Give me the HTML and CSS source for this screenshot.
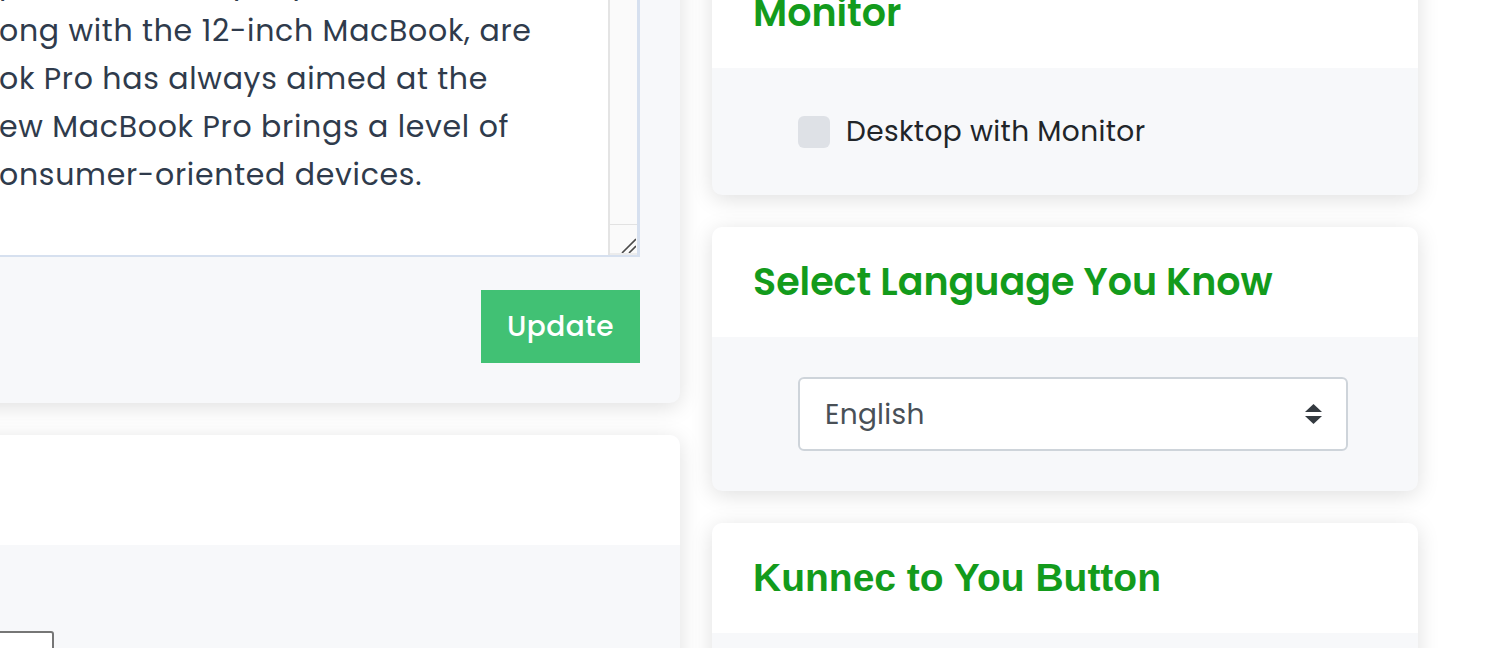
FILE: index.html
```html
<!DOCTYPE html>
<html lang="en">
<head>
<meta charset="utf-8">
<title>Profile settings</title>
<link rel="stylesheet" href="styles.css">
</head>
<body>
<div class="page">
  <div class="col col-left">
    <section class="card">
      <header class="card-head"><h2 class="card-title">Bio</h2></header>
      <div class="card-body">
        <div class="textarea">
          <div class="ta-text">
            <div class="ln"><span class="cut"><span>The new MacBook Pro is</span></span>n't the machine for everyone. It</div>
            <div class="ln"><span class="cut"><span>is a tool built for</span></span> professionals who need power and</div>
            <div class="ln"><span class="cut"><span>portability in one package. Most</span></span> laptops are designed to be</div>
            <div class="ln"><span class="cut"><span>appealing to the masses and po</span></span>pular with everyday users. The Air,</div>
            <div class="ln"><span class="cut"><span>The MacBook Air, al</span></span>ong with the 12-inch MacBook, are</div>
            <div class="ln"><span class="cut"><span>meant for everyone. The MacBo</span></span>ok Pro has always aimed at the</div>
            <div class="ln"><span class="cut"><span>high end of the market, and the n</span></span>ew MacBook Pro brings a level of</div>
            <div class="ln"><span class="cut"><span>performance you won't find in c</span></span>onsumer-oriented devices.</div>
          </div>
          <div class="ta-bar">
            <div class="ta-corner">
              <svg width="26" height="28" viewBox="0 0 26 28"><path d="M12 28 L26 14 M19 28 L26 21" stroke="#4a4a4a" stroke-width="1.6" fill="none"/></svg>
            </div>
          </div>
        </div>
        <div class="actions"><button class="btn" type="button">Update</button></div>
      </div>
    </section>
    <section class="card">
      <header class="card-head"><h2 class="card-title">Links</h2></header>
      <div class="card-body">
        <div class="field-label">Website</div>
        <div class="native-input"></div>
      </div>
    </section>
  </div>
  <div class="col col-right">
    <section class="card">
      <header class="card-head"><h2 class="card-title">Do You Have a Laptop</h2></header>
      <div class="card-body card-body-inset">
        <label class="check-row"><input class="check" type="checkbox"><span class="check-label">Laptop</span></label>
      </div>
    </section>
    <section class="card">
      <header class="card-head"><h2 class="card-title">Do You Have a Desktop with<br>Monitor</h2></header>
      <div class="card-body card-body-inset">
        <label class="check-row"><input class="check" type="checkbox"><span class="check-label">Desktop with Monitor</span></label>
      </div>
    </section>
    <section class="card">
      <header class="card-head"><h2 class="card-title">Select Language You Know</h2></header>
      <div class="card-body card-body-inset">
        <div class="select-wrap">
          <select class="select"><option>English</option><option>French</option><option>Spanish</option></select>
          <svg class="select-arrow" width="17" height="20" viewBox="0 0 17 20"><path d="M8.5 0 L17 8 L0 8 Z M0 12 L17 12 L8.5 20 Z" fill="#343a40"/></svg>
        </div>
      </div>
    </section>
    <section class="card">
      <header class="card-head"><h2 class="card-title card-title-alt">Kunnec to You Button</h2></header>
      <div class="card-body card-body-inset">
        <div class="native-input"></div>
      </div>
    </section>
  </div>
</div>
</body>
</html>
```

FILE: styles.css
```css
* { box-sizing: border-box; }
html, body { margin: 0; }
body {
  background: #ffffff;
  font-family: "Poppins", "Open Sans", sans-serif;
  height: 648px;
  overflow: hidden;
}
.page {
  display: flex;
  align-items: flex-start;
  gap: 32px;
  margin: -357px 0 0 -300px;
}
.col {
  display: flex;
  flex-direction: column;
  gap: 32px;
  flex: none;
}
.col-left { width: 980px; }
.col-right { width: 706px; }
.card {
  background: #f7f8fa;
  border-radius: 10px;
  box-shadow: 0 4px 22px rgba(0, 0, 0, 0.13);
  overflow: hidden;
}
.card-head {
  background: #ffffff;
  padding: 32px 41px 32px;
}
.card-title {
  margin: 0;
  font-size: 38px;
  line-height: 46px;
  font-weight: 600;
  color: #139b1c;
  white-space: nowrap;
}
.card-title-alt {
  font-family: "Liberation Sans", Arial, sans-serif;
  font-weight: 700;
  font-size: 39px;
}
.card-body { padding: 40px; }
.card-body-inset { padding: 40px 41px 40px 86px; }

/* textarea */
.textarea {
  display: flex;
  height: 464px;
  background: #ffffff;
  border: 2px solid #d6e0ef;
  border-right-width: 3px;
}
.ta-text {
  flex: 1;
  min-width: 0;
  overflow: hidden;
  padding: 20px 20px 56px;
}
.ln {
  height: 48px;
  line-height: 48px;
  white-space: nowrap;
  font-size: 30px;
  letter-spacing: 0.7px;
  color: #2f3b4c;
}
.cut {
  display: inline-flex;
  justify-content: flex-end;
  width: 237px;
  overflow: hidden;
  vertical-align: top;
}
.cut > span { flex: none; }
.ta-bar {
  width: 29px;
  flex: none;
  background: #fafafa;
  border-left: 2px solid #e4e4e4;
  display: flex;
  flex-direction: column;
  justify-content: flex-end;
}
.ta-corner {
  height: 31px;
  border-top: 1px solid #e2e2e2;
  border-bottom: 2px solid #ececec;
}
.ta-corner svg { display: block; }

.actions {
  display: flex;
  justify-content: flex-end;
  margin-top: 33px;
}
.btn {
  height: 73px;
  padding: 0 26px;
  background: #41c174;
  color: #ffffff;
  border: 0;
  border-radius: 0;
  font: 500 28px "Poppins", "Open Sans", sans-serif;
  letter-spacing: 0.5px;
}

.field-label {
  font-size: 28px;
  line-height: 46px;
  color: #212529;
}
.native-input {
  width: 314px;
  height: 60px;
  background: #ffffff;
  border: 2px solid #767676;
  border-radius: 3px;
}

/* checkbox */
.check-row {
  display: flex;
  align-items: center;
  gap: 16px;
  height: 47px;
}
.check {
  appearance: none;
  width: 32px;
  height: 32px;
  margin: 0;
  background: #dee1e6;
  border-radius: 6px;
}
.check-label {
  font-size: 28px;
  letter-spacing: 0.4px;
  color: #212529;
}

/* select */
.select-wrap {
  position: relative;
  width: 550px;
}
.select {
  appearance: none;
  display: block;
  width: 100%;
  height: 74px;
  border: 2px solid #ced4da;
  border-radius: 6px;
  background: #ffffff;
  padding: 0 60px 0 25px;
  font: 28px "Poppins", "Open Sans", sans-serif;
  letter-spacing: 0.3px;
  color: #495057;
}
.select-arrow {
  position: absolute;
  right: 26px;
  top: 27px;
  pointer-events: none;
}
```
